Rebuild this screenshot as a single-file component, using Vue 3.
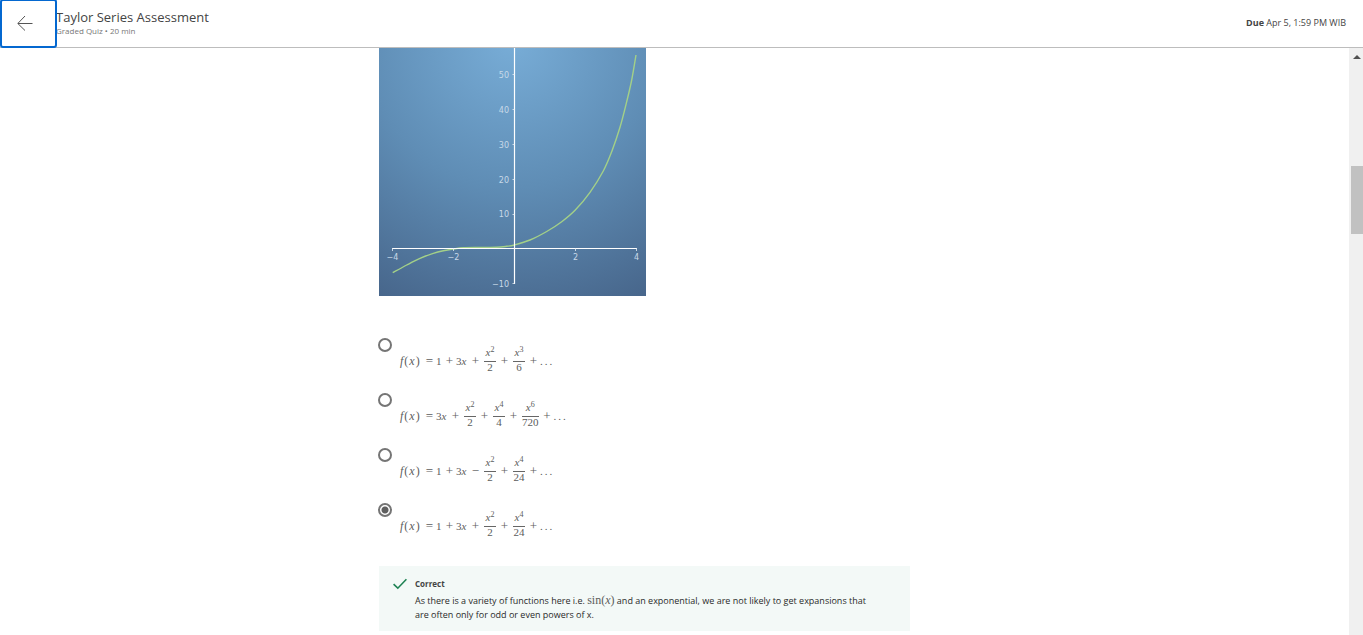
<script setup>
import { ref } from 'vue'

const selected = ref(3)

const fx = { t: 'fn' }
const eq = { t: 'op', v: '=' }
const plus = { t: 'op', v: '+' }
const minus = { t: 'op', v: '−' }
const one = { t: 'num', v: '1' }
const threeX = { t: 'term', v: '3' }
const dots = { t: 'dots' }
const frac = (p, d) => ({ t: 'frac', p, d })

const options = [
  [fx, eq, one, plus, threeX, plus, frac('2', '2'), plus, frac('3', '6'), plus, dots],
  [fx, eq, threeX, plus, frac('2', '2'), plus, frac('4', '4'), plus, frac('6', '720'), plus, dots],
  [fx, eq, one, plus, threeX, minus, frac('2', '2'), plus, frac('4', '24'), plus, dots],
  [fx, eq, one, plus, threeX, plus, frac('2', '2'), plus, frac('4', '24'), plus, dots],
]

const yTicks = [
  { v: '50', y: 27 },
  { v: '40', y: 61.5 },
  { v: '30', y: 96.5 },
  { v: '20', y: 131.5 },
  { v: '10', y: 166 },
  { v: '−10', y: 235.5 },
]
const xTicks = [
  { v: '−4', x: 13.5 },
  { v: '−2', x: 74.5 },
  { v: '2', x: 196.5 },
  { v: '4', x: 257.5 },
]

const points = [
  [13.7, 224.7], [27.7, 217], [41, 210.3], [54.3, 205.3], [64.3, 202.7], [74.3, 201],
  [84.3, 199.8], [101, 199.5], [117.7, 199.3], [127.7, 198.3], [135.3, 197], [151, 192],
  [167.7, 183.5], [182.7, 173.7], [196.3, 162], [211, 144.3], [224.3, 123], [232.7, 103.7],
  [241, 79.3], [247.7, 53.7], [252.7, 32], [257, 7],
]

function smooth(p) {
  let d = `M${p[0]}`
  for (let i = 0; i < p.length - 1; i++) {
    const a = p[i - 1] || p[i]
    const b = p[i]
    const c = p[i + 1]
    const e = p[i + 2] || c
    d += `C${b[0] + (c[0] - a[0]) / 6} ${b[1] + (c[1] - a[1]) / 6} ${c[0] - (e[0] - b[0]) / 6} ${c[1] - (e[1] - b[1]) / 6} ${c[0]} ${c[1]}`
  }
  return d
}
const curve = smooth(points)
</script>

<template>
  <div class="page">
    <header class="bar">
      <button class="back" type="button" aria-label="Back">
        <svg width="16" height="16" viewBox="0 0 16 16" fill="none" stroke="#555" stroke-width="1">
          <path d="M15.5 8.5H1M8 1L.8 8.5L8 15.5" />
        </svg>
      </button>
      <div class="heading">
        <h1>Taylor Series Assessment</h1>
        <p>Graded Quiz • 20 min</p>
      </div>
      <p class="due"><strong>Due</strong> Apr 5, 1:59 PM WIB</p>
    </header>

    <div class="body">
      <main class="scroll">
        <div class="column">
          <svg class="plot" width="267" height="248" viewBox="0 0 267 248" role="img" aria-label="Graph of f(x)">
            <defs>
              <radialGradient id="sky" gradientUnits="userSpaceOnUse" cx="133" cy="-8" r="295">
                <stop offset="0" stop-color="#78add7" />
                <stop offset="0.5" stop-color="#5f8db5" />
                <stop offset="1" stop-color="#466489" />
              </radialGradient>
            </defs>
            <rect width="267" height="248" fill="url(#sky)" />
            <path :d="curve" fill="none" stroke="#a3d088" stroke-width="1.4" />
            <path d="M135.5 0V236M13 200.5H258" stroke="#fff" stroke-width="1.2" />
            <path
              d="M133.5 26.5h2M133.5 61.5h2M133.5 96.5h2M133.5 131.5h2M133.5 166.5h2M133.5 235.5h2M13.5 200v3M74.5 200v3M196.5 200v3M257.5 200v3"
              stroke="#e4edf5"
              stroke-width=".8"
            />
            <g class="ticks">
              <text v-for="t in yTicks" :key="t.v" x="130" :y="t.y + 3" text-anchor="end">{{ t.v }}</text>
              <text v-for="t in xTicks" :key="t.v" :x="t.x" y="212" text-anchor="middle">{{ t.v }}</text>
            </g>
          </svg>

          <div class="options" role="radiogroup" aria-label="Answer">
            <label v-for="(o, i) in options" :key="i" class="option">
              <input v-model="selected" type="radio" name="answer" :value="i" />
              <span class="math">
                <template v-for="(k, j) in o" :key="j">
                  <span v-if="k.t === 'fn'" class="fn"><i>f</i><span>(</span><i>x</i><span>)</span></span>
                  <span v-else-if="k.t === 'op'" class="op">{{ k.v }}</span>
                  <span v-else-if="k.t === 'num'" class="num">{{ k.v }}</span>
                  <span v-else-if="k.t === 'term'" class="term">{{ k.v }}<i>x</i></span>
                  <span v-else-if="k.t === 'frac'" class="frac">
                    <span class="top"><i>x</i><span class="power">{{ k.p }}</span></span>
                    <span class="bottom">{{ k.d }}</span>
                  </span>
                  <span v-else class="dots"><span>.</span><span>.</span><span>.</span></span>
                </template>
              </span>
            </label>
          </div>

          <section class="feedback">
            <svg class="check" width="14" height="12" viewBox="0 0 14 12" fill="none" stroke="#1f8354" stroke-width="1.6">
              <path d="M.6 6.2L4.8 10.2L13.4 1.2" />
            </svg>
            <div>
              <h2>Correct</h2>
              <p>
                As there is a variety of functions here i.e. <span class="sin">sin(<i>x</i>)</span> and an exponential,
                we are not likely to get expansions that are often only for odd or even powers of x.
              </p>
            </div>
          </section>
        </div>
      </main>
      <div class="track" aria-hidden="true">
        <svg class="arrow" width="8" height="4" viewBox="0 0 8 4"><path d="M0 4L4 0L8 4Z" fill="#505050" /></svg>
        <div class="thumb"></div>
      </div>
    </div>
  </div>
</template>

<style>
html,
body {
  margin: 0;
  background: #fff;
}
</style>

<style scoped>
.page {
  display: flex;
  flex-direction: column;
  height: 100vh;
  overflow: hidden;
  font-family: "Open Sans", "Noto Sans", sans-serif;
  color: #2a2a2a;
}
h1,
h2,
p {
  margin: 0;
  font-weight: 400;
}
.bar {
  box-sizing: border-box;
  display: flex;
  flex: none;
  align-items: center;
  height: 48px;
  border-bottom: 1px solid #bdbdbd;
  padding: 0 17px 2px 0;
}
.back {
  position: relative;
  box-sizing: border-box;
  display: flex;
  align-items: center;
  align-self: flex-start;
  justify-content: center;
  width: 57px;
  height: 49px;
  margin-top: -1px;
  padding: 0 8px 2px 0;
  border: 2px solid #0468d0;
  border-radius: 3px;
  background: #fff;
}
.heading {
  flex: 1;
  margin-left: -1px;
}
h1 {
  font-size: 13px;
  line-height: 16px;
  color: #444;
}
.heading p {
  font-size: 8px;
  line-height: 11px;
  color: #777;
}
.due {
  font-size: 9px;
  line-height: 14px;
  color: #444;
}
.body {
  display: flex;
  flex: 1;
  min-height: 0;
}
.scroll {
  flex: 1;
  overflow: hidden;
  padding-right: 60px;
}
.column {
  max-width: 531px;
  margin: 0 auto;
}
.plot {
  display: block;
}
.ticks {
  font: 8px "DejaVu Sans", sans-serif;
  fill: #c8d9e8;
}
.options {
  margin: 41px 0 9px;
}
.option {
  display: flex;
  align-items: flex-start;
  gap: 7px;
  height: 55px;
}
input {
  appearance: none;
  box-sizing: border-box;
  flex: none;
  width: 14px;
  height: 14px;
  margin: 1px 0 0 -1px;
  border: 2px solid #757575;
  border-radius: 50%;
  background: #fff;
}
input:checked {
  background: radial-gradient(circle, #5f5f5f 3px, #fff 4px);
}
.math {
  display: flex;
  align-items: center;
  height: 32px;
  margin-top: 8px;
  font: 11px/14px "Liberation Serif", serif;
  color: #5c5c5c;
}
.fn {
  display: flex;
  gap: 1px;
  box-sizing: border-box;
  width: 24px;
  padding-left: 1px;
  font-size: 12px;
}
.op {
  width: 9px;
  margin: 0 2px;
  font-size: 13px;
  text-align: center;
}
.num {
  width: 7px;
}
.term {
  width: 13px;
}
.frac {
  display: flex;
  flex-direction: column;
  align-items: center;
  min-width: 12px;
  margin: 0 2px;
  line-height: 11px;
}
.top {
  display: flex;
  align-self: stretch;
  justify-content: center;
  height: 14px;
  border-bottom: 1px solid #666;
}
.power {
  font-size: 8px;
  line-height: 6px;
}
.bottom {
  height: 14px;
}
.dots {
  display: flex;
  gap: 2px;
}
.feedback {
  display: flex;
  align-items: flex-start;
  gap: 8px;
  padding: 11px 32px 9px 14px;
  background: #f3f9f7;
}
.check {
  flex: none;
  margin-top: 1px;
}
h2 {
  font-size: 8px;
  font-weight: 700;
  line-height: 14px;
  color: #444;
}
.feedback p {
  margin-top: 3px;
  font-size: 9px;
  line-height: 14px;
}
.sin {
  font: 12px/12px "Liberation Serif", serif;
  color: #5c5c5c;
}
.track {
  box-sizing: border-box;
  flex: none;
  width: 14px;
  padding: 7px 0 0 2px;
  background: #f0f0f0;
}
.arrow {
  display: block;
  margin-left: 2px;
}
.thumb {
  height: 68px;
  margin-top: 107px;
  background: #c1c1c1;
}
</style>
